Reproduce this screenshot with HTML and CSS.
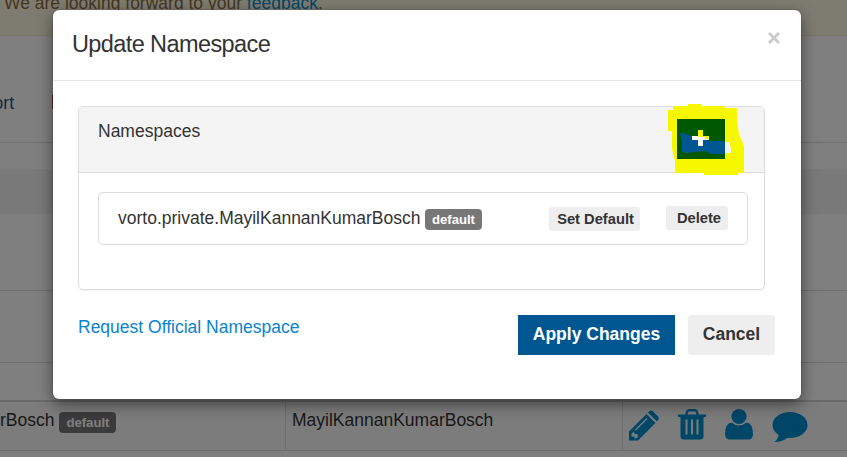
FILE: index.html
```html
<!DOCTYPE html>
<html lang="en">
<head>
<meta charset="utf-8">
<title>Update Namespace</title>
<link rel="stylesheet" href="styles.css">
</head>
<body>
<div class="page">
  <div class="alert"><span>We are looking forward to your <a>feedback</a>.</span></div>
  <nav class="nav"><span class="support">Support</span><span class="nav-mark"></span></nav>
  <div class="gap"></div>
  <div class="band"></div>
  <div class="row first"></div>
  <div class="row second"></div>
  <div class="row third"></div>
  <div class="row data">
    <div class="cell name"><span>rBosch</span><span class="badge">default</span></div>
    <div class="cell owner">MayilKannanKumarBosch</div>
    <div class="cell actions">
      <svg class="pencil" viewBox="0 0 30 31"><path d="M0 30.5V21.5L17.5 4L26.5 13L9 30.5ZM19 2.5L20.5 1Q22 0 23.5 1L29 6.500Q30.500 8 29.500 9.500L28 11.500Z"/><path class="detail" d="M6.500 20L18 8.500"/><path class="tip" d="M2.500 23.500L4.500 22L6 24H8.500V26L9.500 26.500L7 28.500L5.500 28.500V26.500H2.500Z"/></svg>
      <svg class="trash" viewBox="0 0 28 31"><path fill-rule="evenodd" d="M0 5.500H7L8.500 1.500Q9.500 0 11 0H17Q18.500 0 19.500 1.500L21 5.500H28V8H25.500V27.500Q25.500 30.500 22.500 30.500H5.500Q2.500 30.500 2.500 27.500V8H0ZM9.500 5.500H18.500L17.500 2.500H10.500ZM7.500 10.500V25.500H9.500V10.500ZM13 10.500V25.500H15V10.500ZM18.500 10.500V25.500H20.500V10.500Z"/></svg>
      <svg class="user" viewBox="0 0 28 31"><ellipse cx="14" cy="7.500" rx="7.600" ry="7.500"/><path d="M6.500 13.500Q14 19.500 21.500 13.500Q28 14.500 28 25Q28 30.500 23 30.500H5Q0 30.500 0 25Q0 14.500 6.500 13.500Z"/></svg>
      <svg class="comment" viewBox="0 0 36 31"><ellipse cx="18" cy="13" rx="17.5" ry="13"/><path d="M7 21Q7 26 2.500 30Q12 30 17 24Z"/></svg>
    </div>
  </div>
</div>
<div class="backdrop"></div>
<div class="modal" role="dialog">
  <header class="modal-header">
    <h4>Update Namespace</h4>
    <svg class="close" viewBox="0 0 12 12"><path d="M1 1L11 11M11 1L1 11"/></svg>
  </header>
  <div class="modal-body">
    <section class="panel">
      <div class="panel-heading">
        <span>Namespaces</span>
        <svg class="marker" viewBox="0 0 76 72">
          <path fill="#f7f700" d="M5 2H20V0H34V2H57V4H69V18L71 30L76 42V69H70V71H36V69H7V57L4 45V27H0V6H5Z"/>
          <path fill="#005800" d="M9 15H57V55H9Z"/>
          <path fill="#f3f3f3" d="M57 38H62V43H63V49H57Z"/>
          <path fill="#005691" d="M12 29H16L20 31L35 35L42 37H57V50H43L37 47L18 49L14 48V37Z"/>
          <path fill="#fff" d="M30 26H35V32H41V36H35V42H30V36H24V32H30Z"/>
          <path fill="#f7f700" d="M30 26H35V32H41V35H37V33H30Z"/>
        </svg>
      </div>
      <div class="panel-body">
        <div class="item">
          <span>vorto.private.MayilKannanKumarBosch</span><span class="badge">default</span>
          <button class="small set">Set Default</button>
          <button class="small delete">Delete</button>
        </div>
      </div>
    </section>
    <footer class="footer">
      <a>Request Official Namespace</a>
      <button class="apply">Apply Changes</button>
      <button class="cancel">Cancel</button>
    </footer>
  </div>
</div>
</body>
</html>
```

FILE: styles.css
```css
* { box-sizing: border-box; }
body { margin: 0; width: 847px; height: 457px; overflow: hidden; font: 17.5px/24px "Liberation Sans", Arial, sans-serif; color: #333; }
h4 { margin: 0; font-weight: 400; }
button { border: 0; margin: 0; padding: 0; font: bold 17.5px/38px "Liberation Sans", Arial, sans-serif; color: #333; background: #eee; border-radius: 3px; }
.page { height: 457px; background: #fff; }
.alert { height: 36px; background: #fcf8e3; border-bottom: 1px solid #faebcc; color: #8a6d3b; padding-left: 4px; display: flex; }
.alert span { margin-top: -9px; white-space: nowrap; }
.alert a { color: #008ecf; }
.nav { height: 107px; border-bottom: 1px solid #ddd; display: flex; align-items: flex-start; color: #2b5178; }
.support { margin: 55px 0 0 -48px; width: 62px; text-align: right; }
.nav-mark { width: 3px; height: 14px; margin: 59px 0 0 38px; background: #c64d18; }
.gap { height: 26px; }
.band { height: 45px; background: #f3f3f3; }
.row { border-bottom: 1px solid #ddd; }
.first { height: 77px; }
.second { height: 72px; }
.third { height: 39px; border-bottom: 2px solid #d5d5d5; }
.data { height: 49px; display: flex; background: #f9f9f9; }
.cell { border-right: 1px solid #ddd; padding-top: 6px; }
.name { width: 286px; }
.owner { width: 337px; padding-left: 6px; }
.actions { width: 224px; border: 0; display: flex; align-items: flex-start; padding: 7px 0 0 6px; fill: #008ecf; }
.actions svg { height: 31px; flex: none; }
.pencil { width: 30px; margin-top: 1px; }
.pencil .detail { fill: none; stroke: #f9f9f9; stroke-width: 1.3; }
.pencil .tip { fill: #f9f9f9; }
.trash { width: 28px; margin-left: 19px; }
.user { width: 28px; margin-left: 19px; }
.comment { width: 36px; margin: 3px 0 0 18.5px; }
.badge { display: inline-block; height: 21px; margin-left: 5px; padding: 0 7px; border-radius: 4px; background: #777; color: #fff; font-size: 13.1px; line-height: 21px; font-weight: 700; vertical-align: -1px; }
.name .badge { margin-left: 5px; }
.backdrop { position: absolute; inset: 0; background: rgba(0, 0, 0, .5); }
.modal { position: absolute; left: 53px; top: 10px; width: 748px; height: 389px; background: #fff; border-radius: 6px; box-shadow: 0 0 1px rgba(0,0,0,.6), 0 5px 15px rgba(0, 0, 0, .5); }
.modal-header { height: 71px; border-bottom: 1px solid #e5e5e5; display: flex; justify-content: space-between; padding: 20px 21px 0 19px; }
.modal-header h4 { font-size: 23.5px; line-height: 28px; letter-spacing: -.6px; }
.close { width: 12px; height: 12px; margin-top: 2px; fill: none; stroke: #ccc; stroke-width: 3; }
.modal-body { padding: 25px 26px 0 25px; }
.panel { width: 687px; height: 184px; border: 1px solid #ddd; border-radius: 5px; box-shadow: 0 1px 1px rgba(0,0,0,.05); }
.panel-heading { position: relative; height: 66px; background: #f4f4f4; border-bottom: 1px solid #ddd; padding: 12px 19px; border-radius: 4px 4px 0 0; }
.marker { position: absolute; left: 589px; top: -3px; width: 76px; height: 72px; }
.panel-body { padding: 19px 16px 0 19px; }
.item { height: 53px; border: 1px solid #ddd; border-radius: 5px; padding: 13px 19px; display: flex; align-items: flex-start; white-space: nowrap; }
.item .badge { margin: 3px 0 0 4.5px; }
.small { height: 24px; font-size: 14.7px; line-height: 24px; flex: none; }
.set { width: 91px; margin: 1px 0 0 auto; padding-left: 2px; }
.delete { width: 62px; margin-left: 26px; padding-left: 4px; }
.footer { display: flex; align-items: flex-start; padding-top: 25px; }
.footer a { color: #0a84cd; margin-right: auto; }
.apply { width: 157px; height: 40px; padding-bottom: 2px; border-radius: 0; color: #fff; background: #005691; }
.cancel { width: 87px; height: 40px; padding-bottom: 2px; margin-left: 13px; }
```
